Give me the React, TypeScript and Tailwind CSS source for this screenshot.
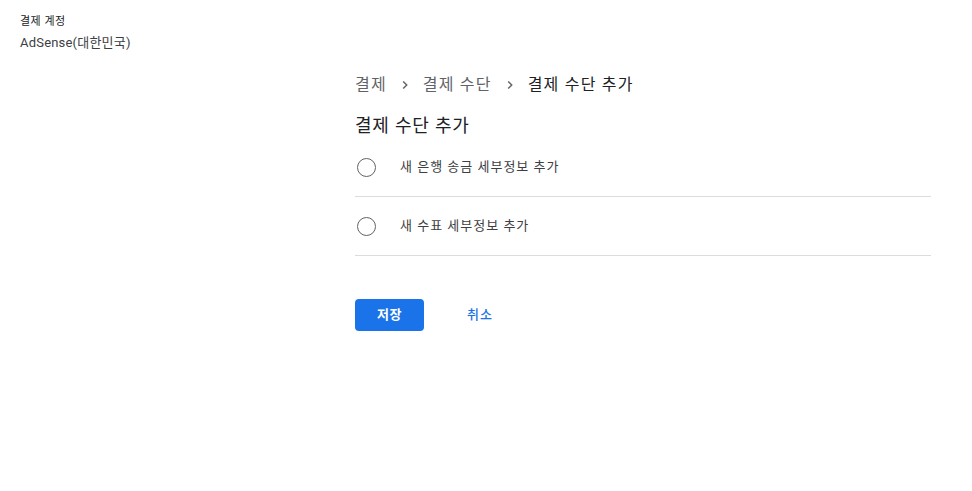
import React from "react";

const font = { fontFamily: 'Roboto, "Noto Sans CJK KR", "Noto Sans", sans-serif' };

function Chevron() {
  return (
    <svg width="16" height="16" viewBox="0 0 24 24" className="mx-[10px]">
      <path d="M9.3 6.7 14.6 12l-5.3 5.3" fill="none" stroke="#5f6368" strokeWidth="2.2" />
    </svg>
  );
}

function Row({ label }: { label: string }) {
  return (
    <div className="flex items-center h-[59px] border-b border-[#dadce0]">
      <div className="ml-[2px] w-[19px] h-[19px] rounded-full border-[1.5px] border-[#5f6368]" />
      <span className="ml-[24px] text-[13px] tracking-[1px] text-[#3c4043]">{label}</span>
    </div>
  );
}

export default function App() {
  return (
    <div className="flex w-[972px] h-[491px] bg-white" style={font}>
      <div className="w-[355px] pl-5 pt-[14px]">
        <div className="text-[11px] leading-[16px] tracking-[0.5px] text-[#202124]">결제 계정</div>
        <div className="text-[13px] leading-[20px] mt-[3px] tracking-[0.2px] text-[#3c4043]">AdSense(대한민국)</div>
      </div>
      <div className="w-[576px] pt-[73px]">
        <div className="flex items-center h-6 text-[16px] tracking-[1.2px] text-[#5f6368]">
          <span>결제</span>
          <Chevron />
          <span>결제 수단</span>
          <Chevron />
          <span className="text-[#202124]">결제 수단 추가</span>
        </div>
        <div className="mt-[17px] h-6 leading-6 text-[18px] tracking-[0.8px] text-[#202124]">결제 수단 추가</div>
        <div>
          <Row label="새 은행 송금 세부정보 추가" />
          <Row label="새 수표 세부정보 추가" />
        </div>
        <div className="flex items-center mt-[43px]">
          <button className="w-[69px] h-[32px] rounded-[4px] bg-[#1a73e8] text-white text-[13px] tracking-[0.5px] font-bold">
            저장
          </button>
          <button className="ml-[43px] text-[13px] tracking-[1px] text-[#1a73e8] font-medium">취소</button>
        </div>
      </div>
    </div>
  );
}
